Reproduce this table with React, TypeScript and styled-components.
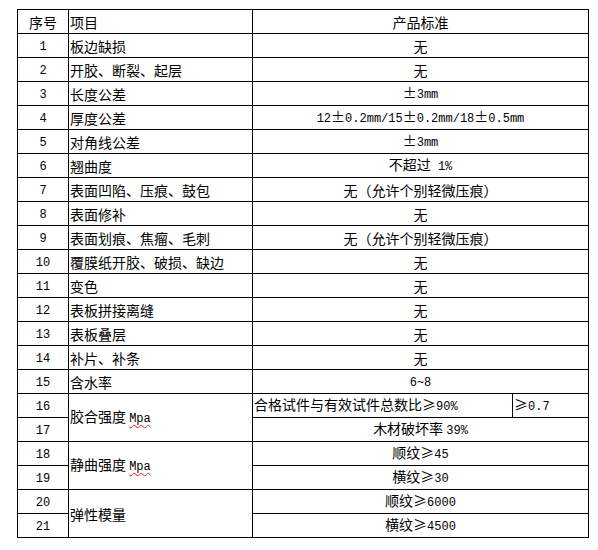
import * as React from 'react'
import styled, { createGlobalStyle } from 'styled-components'

const GlobalStyle = createGlobalStyle`
  html, body {
    margin: 0;
    padding: 0;
    background: #fff;
  }
  body {
    font-family: "Noto Sans CJK SC", sans-serif;
    font-size: 14px;
    color: #000;
  }
`

type Row = { no: string; item: string; value: string }

const simpleRows: Row[] = [
  { no: '1', item: '板边缺损', value: '无' },
  { no: '2', item: '开胶、断裂、起层', value: '无' },
  { no: '3', item: '长度公差', value: '±3mm' },
  { no: '4', item: '厚度公差', value: '12±0.2mm/15±0.2mm/18±0.5mm' },
  { no: '5', item: '对角线公差', value: '±3mm' },
  { no: '6', item: '翘曲度', value: '不超过 1%' },
  { no: '7', item: '表面凹陷、压痕、鼓包', value: '无（允许个别轻微压痕）' },
  { no: '8', item: '表面修补', value: '无' },
  { no: '9', item: '表面划痕、焦瘤、毛刺', value: '无（允许个别轻微压痕）' },
  { no: '10', item: '覆膜纸开胶、破损、缺边', value: '无' },
  { no: '11', item: '变色', value: '无' },
  { no: '12', item: '表板拼接离缝', value: '无' },
  { no: '13', item: '表板叠层', value: '无' },
  { no: '14', item: '补片、补条', value: '无' },
  { no: '15', item: '含水率', value: '6~8' },
]

// split a string into latin / cjk runs so digits get the narrow font
const Text = ({ children }: { children: string }) => {
  const parts = children.match(/[A-Za-z0-9.%/~ ]+|[^A-Za-z0-9.%/~ ]+/g) || []
  return (
    <>
      {parts.map((p, i) =>
        /^[A-Za-z0-9.%/~ ]+$/.test(p) ? <Lat key={i}>{p}</Lat> : <span key={i}>{p}</span>
      )}
    </>
  )
}

const Unit = () => <Spell><Lat>Mpa</Lat></Spell>

const App = () => (
  <Page>
    <GlobalStyle />
    <Table>
      <colgroup>
        <col style={{ width: 51 }} />
        <col style={{ width: 184 }} />
        <col style={{ width: 260 }} />
        <col style={{ width: 76 }} />
      </colgroup>
      <tbody>
        <tr>
          <Cell $align="center">序号</Cell>
          <Cell>项目</Cell>
          <Cell $align="center" colSpan={2}>产品标准</Cell>
        </tr>
        {simpleRows.map((r) => (
          <tr key={r.no}>
            <Cell $align="center"><Lat>{r.no}</Lat></Cell>
            <Cell>{r.item}</Cell>
            <Cell $align="center" colSpan={2}><Text>{r.value}</Text></Cell>
          </tr>
        ))}
        <tr>
          <Cell $align="center"><Lat>16</Lat></Cell>
          <Cell rowSpan={2}>胶合强度 <Unit /></Cell>
          <Cell>合格试件与有效试件总数比≥<Lat>90%</Lat></Cell>
          <Cell>≥<Lat>0.7</Lat></Cell>
        </tr>
        <tr>
          <Cell $align="center"><Lat>17</Lat></Cell>
          <Cell $align="center" colSpan={2}>木材破坏率 <Lat>39%</Lat></Cell>
        </tr>
        <tr>
          <Cell $align="center"><Lat>18</Lat></Cell>
          <Cell rowSpan={2}>静曲强度 <Unit /></Cell>
          <Cell $align="center" colSpan={2}>顺纹≥<Lat>45</Lat></Cell>
        </tr>
        <tr>
          <Cell $align="center"><Lat>19</Lat></Cell>
          <Cell $align="center" colSpan={2}>横纹≥<Lat>30</Lat></Cell>
        </tr>
        <tr>
          <Cell $align="center"><Lat>20</Lat></Cell>
          <Cell rowSpan={2}>弹性模量</Cell>
          <Cell $align="center" colSpan={2}>顺纹≥<Lat>6000</Lat></Cell>
        </tr>
        <tr>
          <Cell $align="center"><Lat>21</Lat></Cell>
          <Cell $align="center" colSpan={2}>横纹≥<Lat>4500</Lat></Cell>
        </tr>
      </tbody>
    </Table>
  </Page>
)

const Page = styled.div`
  padding: 9px 0 0 17px;
`
const Table = styled.table`
  border-collapse: collapse;
  table-layout: fixed;
  width: 571px;
`
const Cell = styled.td<{ $align?: 'left' | 'center' }>`
  border: 1px solid #000;
  height: 23px;
  padding: 0 1px;
  line-height: 16px;
  text-align: ${(p) => p.$align || 'left'};
  vertical-align: middle;
  white-space: nowrap;
  overflow: hidden;
`
const Lat = styled.span`
  font-family: "Liberation Mono", monospace;
  font-size: 12px;
`
const Spell = styled.span`
  text-decoration: underline wavy #e0201c;
  text-decoration-thickness: 1px;
  text-underline-offset: 2px;
`

export default App
